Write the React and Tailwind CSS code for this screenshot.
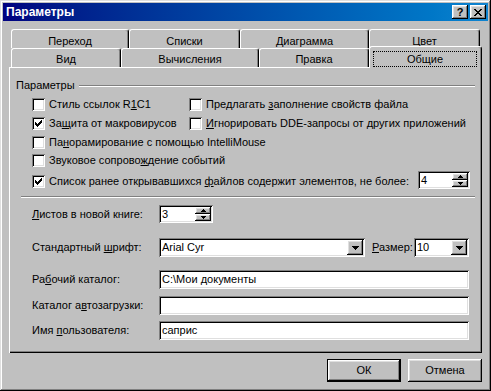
import React from "react";

const RAISED = "shadow-[inset_-1px_-1px_#000,inset_1px_1px_#fff,inset_-2px_-2px_#808080,inset_2px_2px_#dfdfdf]";
const SUNKEN = "shadow-[inset_1px_1px_#808080,inset_-1px_-1px_#fff,inset_2px_2px_#000,inset_-2px_-2px_#dfdfdf]";

function U({ children }) {
  return <span className="underline underline-offset-1">{children}</span>;
}

function Check({ checked }) {
  return (
    <div className={`w-[13px] h-[13px] bg-white shrink-0 ${SUNKEN}`}>
      {checked && (
        <svg width="13" height="13" viewBox="0 0 13 13" shapeRendering="crispEdges">
          <rect x="3" y="5" width="1" height="3" fill="#000" />
          <rect x="4" y="6" width="1" height="3" fill="#000" />
          <rect x="5" y="7" width="1" height="3" fill="#000" />
          <rect x="6" y="6" width="1" height="3" fill="#000" />
          <rect x="7" y="5" width="1" height="3" fill="#000" />
          <rect x="8" y="4" width="1" height="3" fill="#000" />
          <rect x="9" y="3" width="1" height="3" fill="#000" />
        </svg>
      )}
    </div>
  );
}

function CheckRow({ checked, children, className = "" }) {
  return (
    <div className={`flex items-center gap-[4px] h-[13px] ${className}`}>
      <Check checked={checked} />
      <span className="leading-[13px] whitespace-nowrap">{children}</span>
    </div>
  );
}

function Spin({ value, w }) {
  return (
    <div className={`${w} h-[18px] bg-white flex items-stretch p-[2px] ${SUNKEN}`}>
      <div className="flex-1 pl-px flex items-center leading-none">{value}</div>
      <div className="w-[16px] flex flex-col">
        <div className={`flex-1 bg-[#c0c0c0] flex items-center justify-center ${RAISED}`}>
          <svg width="5" height="3" viewBox="0 0 5 3" shapeRendering="crispEdges">
            <rect x="2" y="0" width="1" height="1" fill="#000" />
            <rect x="1" y="1" width="3" height="1" fill="#000" />
            <rect x="0" y="2" width="5" height="1" fill="#000" />
          </svg>
        </div>
        <div className={`flex-1 bg-[#c0c0c0] flex items-center justify-center ${RAISED}`}>
          <svg width="5" height="3" viewBox="0 0 5 3" shapeRendering="crispEdges">
            <rect x="0" y="0" width="5" height="1" fill="#000" />
            <rect x="1" y="1" width="3" height="1" fill="#000" />
            <rect x="2" y="2" width="1" height="1" fill="#000" />
          </svg>
        </div>
      </div>
    </div>
  );
}

function Combo({ value, w }) {
  return (
    <div className={`${w} h-[19px] bg-white flex items-stretch p-[2px] ${SUNKEN}`}>
      <div className="flex-1 pl-px flex items-center leading-none">{value}</div>
      <div className={`w-[16px] bg-[#c0c0c0] flex items-center justify-center ${RAISED}`}>
        <svg width="7" height="4" viewBox="0 0 7 4" shapeRendering="crispEdges">
          <rect x="0" y="0" width="7" height="1" fill="#000" />
          <rect x="1" y="1" width="5" height="1" fill="#000" />
          <rect x="2" y="2" width="3" height="1" fill="#000" />
          <rect x="3" y="3" width="1" height="1" fill="#000" />
        </svg>
      </div>
    </div>
  );
}

function TextField({ value }) {
  return (
    <div className={`w-[310px] h-[19px] bg-white flex items-center pl-[3px] leading-none ${SUNKEN}`}>
      {value}
    </div>
  );
}

function Tab({ w, pt, children }) {
  return (
    <div
      className={`${w} ${pt} h-full bg-[#c0c0c0] border-t border-l border-white border-r border-r-black rounded-t-[3px] shadow-[inset_-1px_0_#808080] flex justify-center items-start leading-[13px]`}
    >
      {children}
    </div>
  );
}

function Etched({ className = "" }) {
  return <div className={`h-[2px] border-t border-t-[#808080] border-b border-b-white ${className}`} />;
}

export default function App() {
  return (
    <div className="w-[491px] h-[391px] bg-[#c0c0c0] p-[3px] flex flex-col text-[11px] text-black [font-family:'Liberation_Sans',Arial,sans-serif] shadow-[inset_-1px_-1px_#000,inset_1px_1px_#dfdfdf,inset_-2px_-2px_#808080,inset_2px_2px_#fff]">
      {/* Title bar */}
      <div className="h-[18px] bg-gradient-to-r from-[#000080] to-[#1084d0] flex items-center pl-[3px] pr-[2px]">
        <span className="text-white font-bold text-[12px] leading-none flex-1">Параметры</span>
        <div className={`w-[16px] h-[14px] bg-[#c0c0c0] flex items-center justify-center font-bold text-[11px] leading-none ${RAISED}`}>
          ?
        </div>
        <div className={`w-[16px] h-[14px] ml-[2px] bg-[#c0c0c0] flex items-center justify-center ${RAISED}`}>
          <svg width="8" height="7" viewBox="0 0 8 7" shapeRendering="crispEdges">
            <path d="M0 0h2v1h-2z M6 0h2v1h-2z M1 1h2v1h-2z M5 1h2v1h-2z M2 2h4v1h-4z M3 3h2v1h-2z M2 4h4v1h-4z M1 5h2v1h-2z M5 5h2v1h-2z M0 6h2v1h-2z M6 6h2v1h-2z" fill="#000" />
          </svg>
        </div>
      </div>

      {/* Body */}
      <div className="pl-[6px] pt-[8px] w-[479px]">
        {/* Tab row 1 */}
        <div className="h-[19px] flex ml-[2px]">
          <Tab w="w-[118px]" pt="pt-[5px]">Переход</Tab>
          <Tab w="w-[111px]" pt="pt-[5px]">Списки</Tab>
          <Tab w="w-[129px]" pt="pt-[5px]">Диаграмма</Tab>
          <Tab w="w-[111px]" pt="pt-[5px]">Цвет</Tab>
        </div>
        {/* Tab row 2 */}
        <div className="h-[19px] flex ml-[2px]">
          <Tab w="w-[110px]" pt="pt-[4px]">Вид</Tab>
          <Tab w="w-[138px]" pt="pt-[4px]">Вычисления</Tab>
          <Tab w="w-[110px]" pt="pt-[4px]">Правка</Tab>
          <div className="relative z-10 w-[113px] h-[22px] -mt-[2px] bg-[#c0c0c0] border-t border-l border-white border-r border-r-black rounded-t-[3px] shadow-[inset_-1px_0_#808080] pt-[4px] pl-[3px] pr-[4px] pb-[1px]">
            <div className="h-full border border-dotted border-black flex items-center justify-center leading-[13px]">
              Общие
            </div>
          </div>
        </div>

        {/* Panel */}
        <div className="w-[473px] h-[286px] shadow-[inset_1px_1px_#fff,inset_-1px_-1px_#000,inset_-2px_-2px_#808080] flex flex-col">
          {/* group header */}
          <div className="mt-[12px] h-[13px] flex items-center pl-[7px] pr-[7px]">
            <span className="leading-[13px] whitespace-nowrap">Параметры</span>
            <Etched className="flex-1 ml-[4px] mt-[1px]" />
          </div>
          <div className="mt-[6px] flex pl-[23px]">
            <CheckRow className="w-[157px]">
              Стиль ссылок R<U>1</U>C1
            </CheckRow>
            <CheckRow>
              Предлагать <U>з</U>аполнение свойств файла
            </CheckRow>
          </div>
          <div className="mt-[6px] flex pl-[23px]">
            <CheckRow checked className="w-[157px]">
              За<U>щ</U>ита от макровирусов
            </CheckRow>
            <CheckRow>
              <U>И</U>гнорировать DDE-запросы от других приложений
            </CheckRow>
          </div>
          <div className="mt-[6px] flex pl-[23px]">
            <CheckRow>
              Па<U>н</U>орамирование с помощью IntelliMouse
            </CheckRow>
          </div>
          <div className="mt-[5px] flex pl-[23px]">
            <CheckRow>
              Звуковое сопрово<U>ж</U>дение событий
            </CheckRow>
          </div>
          <div className="mt-[4px] flex items-start justify-between pl-[23px] pr-[12px]">
            <CheckRow checked className="mt-[4px]">
              Список ранее открывавшихся <U>ф</U>айлов содержит элементов, не более:
            </CheckRow>
            <Spin value="4" w="w-[52px]" />
          </div>

          <Etched className="mt-[7px] ml-[12px] mr-[7px]" />

          <div className="mt-[7px] flex items-center pl-[23px]">
            <div className="w-[127px] shrink-0 leading-[13px]">
              <U>Л</U>истов в новой книге:
            </div>
            <Spin value="3" w="w-[54px]" />
          </div>

          <div className="mt-[15px] flex items-center pl-[23px]">
            <div className="w-[127px] shrink-0 leading-[13px]">
              Стандартный <U>ш</U>рифт:
            </div>
            <Combo value="Arial Cyr" w="w-[206px]" />
            <div className="ml-[7px] w-[42px] leading-[13px]">
              <U>Р</U>азмер:
            </div>
            <Combo value="10" w="w-[55px]" />
          </div>

          <div className="mt-[13px] flex items-center pl-[23px]">
            <div className="w-[127px] shrink-0 leading-[13px]">
              Ра<U>б</U>очий каталог:
            </div>
            <TextField value="C:\Мои документы" />
          </div>
          <div className="mt-[7px] flex items-center pl-[23px]">
            <div className="w-[127px] shrink-0 leading-[13px]">
              Каталог а<U>в</U>тозагрузки:
            </div>
            <TextField value="" />
          </div>
          <div className="mt-[6px] flex items-center pl-[23px]">
            <div className="w-[127px] shrink-0 leading-[13px]">
              Имя <U>п</U>ользователя:
            </div>
            <TextField value="саприс" />
          </div>
        </div>

        {/* Buttons */}
        <div className="w-[473px] mt-[6px] flex justify-end gap-[7px]">
          <div className="w-[74px] h-[23px] border border-black">
            <div className={`w-full h-full flex items-center justify-center leading-none ${RAISED}`}>ОК</div>
          </div>
          <div className={`w-[74px] h-[23px] flex items-center justify-center leading-none ${RAISED}`}>Отмена</div>
        </div>
      </div>
    </div>
  );
}
